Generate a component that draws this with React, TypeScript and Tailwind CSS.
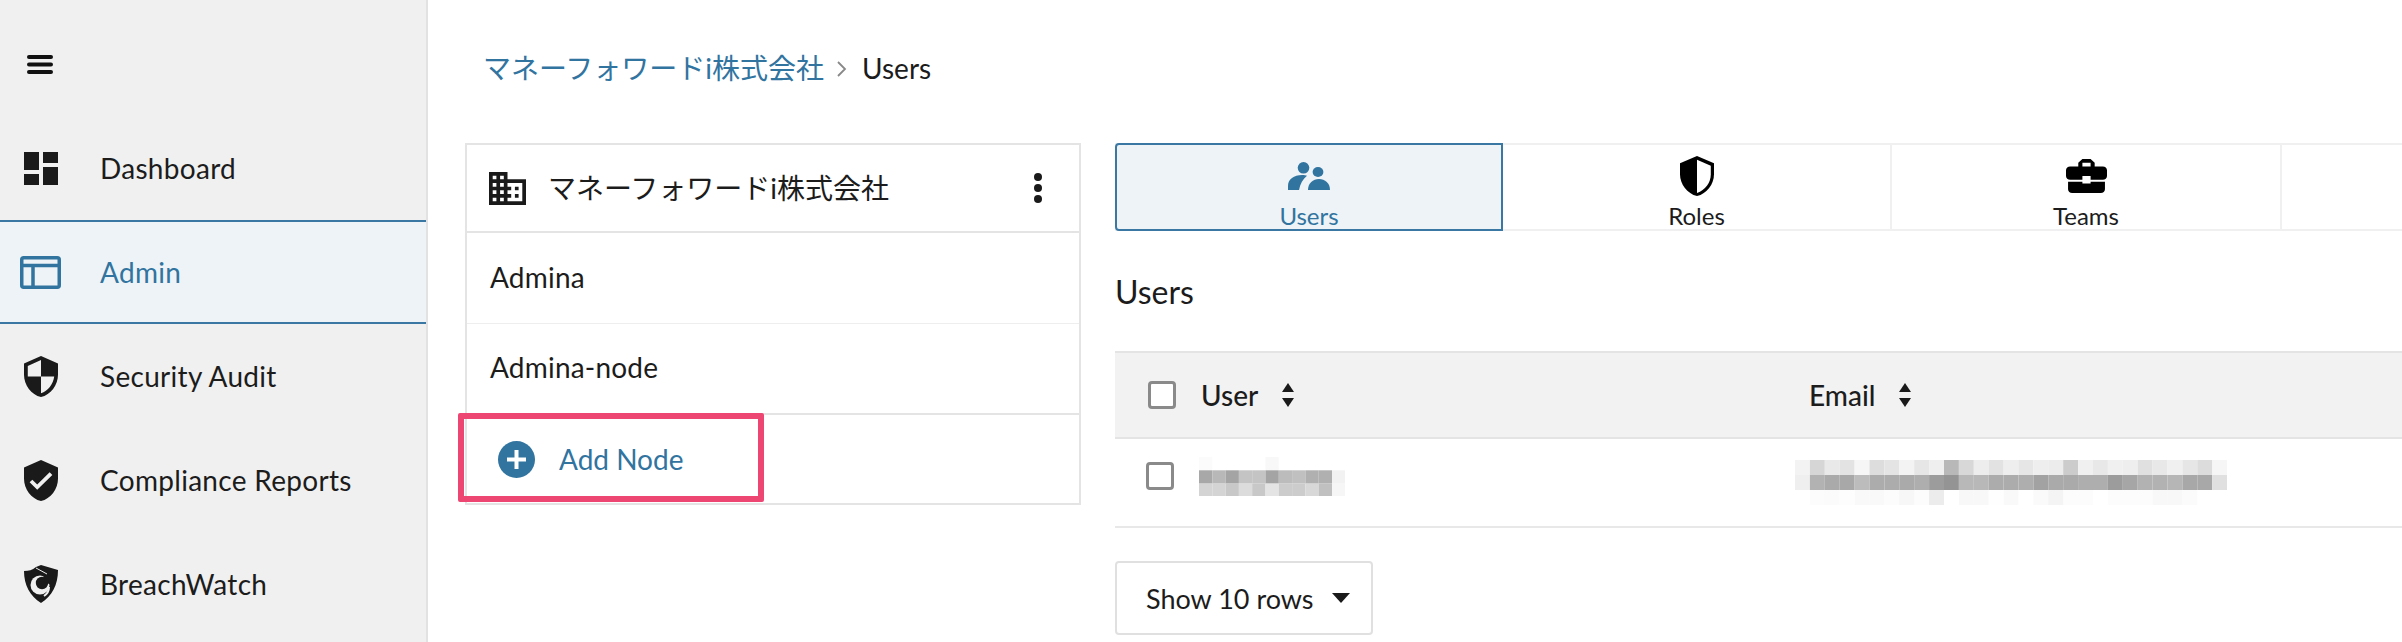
const font = { fontFamily: 'Lato, "Noto Sans CJK JP", sans-serif' };

const userCells = [
  ['#fbfbfb', '#ffffff', '#ffffff', '#ffffff', '#ffffff', '#f8f8f8', '#ffffff', '#ffffff', '#ffffff', '#ffffff', '#ffffff'],
  ['#a8a8a8', '#b8b8b8', '#a4a4a4', '#c4c4c4', '#c4c4c4', '#a4a4a4', '#bcbcbc', '#c0c0c0', '#b0b0b0', '#b0b0b0', '#f2f2f2'],
  ['#d4d4d4', '#d4d4d4', '#c8c8c8', '#dcdcdc', '#c8c8c8', '#e4e4e4', '#cccccc', '#cccccc', '#d8d8d8', '#c0c0c0', '#f6f6f6'],
];

const emailCells = [
  ['#f3f3f3', '#d6d6d6', '#e9e9e9', '#e3e3e3', '#f6f6f6', '#dddddd', '#e4e4e4', '#f3f3f3', '#e6e6e6', '#efefef', '#b8b8b8', '#d8d8d8', '#ededed', '#e2e2e2', '#eeeeee', '#e6e6e6', '#eeeeee', '#ececec', '#cccccc', '#f0f0f0', '#e8e8e8', '#f0f0f0', '#eeeeee', '#e0e0e0', '#e8e8e8', '#f0f0f0', '#e6e6e6', '#dcdcdc', '#f6f6f6'],
  ['#efefef', '#b2b2b2', '#aaaaaa', '#a8a8a8', '#bcbcbc', '#acacac', '#acacac', '#aaaaaa', '#aeaeae', '#9c9c9c', '#949494', '#b8b8b8', '#b8b8b8', '#acacac', '#acacac', '#aeaeae', '#a2a2a2', '#aaaaaa', '#aaaaaa', '#aeaeae', '#aeaeae', '#9c9c9c', '#a6a6a6', '#b2b2b2', '#b2b2b2', '#b6b6b6', '#a8a8a8', '#a8a8a8', '#e0e0e0'],
  ['#ffffff', '#fcfcfc', '#fbfbfb', '#fdfdfd', '#f9f9f9', '#f9f9f9', '#fcfcfc', '#f7f7f7', '#fcfcfc', '#ececec', '#ffffff', '#f8f8f8', '#f8f8f8', '#fefefe', '#f9f9f9', '#ffffff', '#fafafa', '#f4f4f4', '#fcfcfc', '#fcfcfc', '#ffffff', '#fcfcfc', '#fcfcfc', '#fcfcfc', '#f8f8f8', '#f8f8f8', '#fbfbfb', '#ffffff', '#ffffff'],
];

function Mosaic({ rows, cell, height }: { rows: string[][]; cell: number; height: number }) {
  return (
    <svg width={rows[0].length * cell} height={rows.length * height} className="block">
      {rows.map((row, y) =>
        row.map((c, x) => <rect key={`${x}-${y}`} x={x * cell} y={y * height} width={cell} height={height} fill={c} />),
      )}
    </svg>
  );
}

function SortIcon() {
  return (
    <svg width="14" height="26" viewBox="0 0 14 26" className="shrink-0 block" fill="#1a1a1a">
      <path d="M7 1l6 9H1z" />
      <path d="M7 25l6-9H1z" />
    </svg>
  );
}

function Checkbox() {
  return <div className="w-[28px] h-[28px] rounded-[4px] border-[3px] border-[#8a8a8a] bg-white shrink-0" />;
}

function NavItem({ icon, label, active }: { icon: React.ReactNode; label: string; active?: boolean }) {
  return (
    <div
      className={`h-[104px] flex items-center ${
        active ? 'bg-[#edf3f7] border-y-2 border-[#3a78a3] text-[#31749f]' : 'text-[#1c1c1c]'
      }`}
    >
      <div className="w-[81px] mr-[19px] flex justify-center shrink-0">{icon}</div>
      <span className="text-[28px] leading-none tracking-[0.3px]">{label}</span>
    </div>
  );
}

export default function App() {
  return (
    <div className="w-[2402px] h-[642px] overflow-hidden flex bg-white" style={font}>
      {/* Sidebar */}
      <aside className="w-[428px] h-full shrink-0 bg-[#f0f0f0] border-r-[2px] border-[#e2e2e2]">
        <div className="h-[116px] pl-[27px] pt-[55px]">
          <svg width="26" height="19" viewBox="0 0 26 19" fill="#111" className="block">
            <rect width="26" height="4" y="0" rx="2" />
            <rect width="26" height="4" y="7.500" rx="2" />
            <rect width="26" height="4" y="15" rx="2" />
          </svg>
        </div>
        <NavItem
          label="Dashboard"
          icon={
            <svg width="34" height="33" viewBox="0 0 34 33" fill="#1a1a1a">
              <rect x="0" y="0" width="15" height="18" />
              <rect x="19" y="0" width="15" height="11" />
              <rect x="0" y="22" width="15" height="11" />
              <rect x="19" y="15" width="15" height="18" />
            </svg>
          }
        />
        <NavItem
          active
          label="Admin"
          icon={
            <svg width="41" height="33" viewBox="0 0 41 33" fill="none" stroke="#31749f" strokeWidth="3.500">
              <rect x="1.750" y="1.750" width="37.500" height="29.500" rx="2" />
              <path d="M2 9.500h37M13 9.500v22" />
            </svg>
          }
        />
        <NavItem
          label="Security Audit"
          icon={
            <svg width="34" height="41" viewBox="3 1 18 22" preserveAspectRatio="none" fill="#1a1a1a">
              <path d="M12 1L3 5v6c0 5.550 3.840 10.740 9 12 5.160-1.260 9-6.450 9-12V5l-9-4zm0 10.990h7c-.530 4.120-3.280 7.790-7 8.940V12H5V6.300l7-3.110v8.800z" />
            </svg>
          }
        />
        <NavItem
          label="Compliance Reports"
          icon={
            <svg width="34" height="41" viewBox="3 1 18 22" preserveAspectRatio="none" fill="#1a1a1a">
              <path d="M12 1L3 5v6c0 5.550 3.840 10.740 9 12 5.160-1.260 9-6.450 9-12V5l-9-4zm-2 16l-4-4 1.410-1.410L10 14.170l6.590-6.590L18 9l-8 8z" />
            </svg>
          }
        />
        <NavItem
          label="BreachWatch"
          icon={
            <svg width="34" height="38" viewBox="0 0 34 38" fill="#1a1a1a">
              <path d="M0 6c5 0 8-1 12-4l5-2 17 5c0 15-6 26-17 33C6 31 0 20 0 6z" />
              <circle cx="16" cy="20" r="9.500" fill="#f0f0f0" />
              <circle cx="18" cy="18" r="6.200" fill="#1a1a1a" />
              <path d="M19 10l10 1-2 9-6-3z" fill="#1a1a1a" />
              <path d="M12 3l11 6" fill="none" stroke="#f0f0f0" strokeWidth="1" />
              <path d="M25 22c0 4-2 7-5 9" fill="none" stroke="#f0f0f0" strokeWidth="2" />
            </svg>
          }
        />
      </aside>

      {/* Main */}
      <main className="flex-1 min-w-0 pl-[37px]">
        <div className="h-[143px] pt-[50px] pl-[18px] flex items-start text-[28px] leading-[36px]">
          <span className="text-[#31749f]">マネーフォワードi株式会社</span>
          <svg width="10" height="16" viewBox="0 0 10 16" fill="none" stroke="#888888" strokeWidth="1.800" className="ml-[13px] mt-[11px]">
            <path d="M1 1l7 7-7 7" />
          </svg>
          <span className="ml-[15px] text-[#1c1c1c]">Users</span>
        </div>

        <div className="flex gap-[34px] items-start">
          {/* Node tree */}
          <div className="w-[616px] shrink-0 border-2 border-[#e4e4e4] text-[#1c1c1c]">
            <div className="h-[88px] border-b-2 border-[#e4e4e4] flex items-center pl-[22px] pr-[36px]">
              <svg width="37" height="33" viewBox="2 3 20 18" preserveAspectRatio="none" fill="#1a1a1a" className="shrink-0">
                <path d="M12 7V3H2v18h20V7H12zM6 19H4v-2h2v2zm0-4H4v-2h2v2zm0-4H4V9h2v2zm0-4H4V5h2v2zm4 12H8v-2h2v2zm0-4H8v-2h2v2zm0-4H8V9h2v2zm0-4H8V5h2v2zm10 12h-8v-2h2v-2h-2v-2h2v-2h-2V9h8v10zm-2-8h-2v2h2v-2zm0 4h-2v2h2v-2z" />
              </svg>
              <span className="ml-[22px] flex-1 text-[28px] leading-none">マネーフォワードi株式会社</span>
              <svg width="10" height="32" viewBox="0 0 10 32" fill="#1a1a1a">
                <circle cx="5" cy="5" r="4" />
                <circle cx="5" cy="16" r="4" />
                <circle cx="5" cy="27" r="4" />
              </svg>
            </div>
            <div className="h-[91px] pb-[3px] border-b border-[#eeeeee] flex items-center pl-[23px] text-[28px] tracking-[0.2px]">Admina</div>
            <div className="h-[91px] pb-[3px] border-b-2 border-[#e4e4e4] flex items-center pl-[23px] text-[28px] tracking-[0.2px]">Admina-node</div>
            <div className="relative h-[88px] flex items-center pl-[31px] text-[#31749f] text-[28px]">
              <svg width="37" height="37" viewBox="0 0 37 37" className="shrink-0">
                <circle cx="18.500" cy="18.500" r="18.500" fill="#31749f" />
                <path d="M18.500 9v19M9 18.500h19" stroke="#fff" strokeWidth="4" />
              </svg>
              <span className="ml-[24px]">Add Node</span>
              <div className="absolute left-[-9px] top-[-2px] w-[306px] h-[89px] border-[6px] border-[#ee4672] rounded-[2px]" />
            </div>
          </div>

          {/* Right column */}
          <div className="flex-1 min-w-0">
            <div className="flex h-[88px] border-y-2 border-[#f0f0f0]">
              <div className="-my-[2px] w-[388px] shrink-0 rounded-l-[4px] border-2 border-[#3a78a3] bg-[#edf3f7] flex flex-col items-center pt-[17px] text-[#31749f]">
                <svg width="42" height="28" viewBox="0 0 42 28" fill="#31749f" className="shrink-0">
                  <circle cx="15.500" cy="5.800" r="5.800" />
                  <ellipse cx="30" cy="10" rx="5.400" ry="5" />
                  <path d="M0 28v-4C0 17 6 13 14 13c2 0 4 .3 5 .8C15 17 12 22 11 28z" />
                  <path d="M20 28c0-7 5-11 11-11s11 4 11 11z" />
                </svg>
                <span className="text-[24px] leading-[26px] mt-[13px]">Users</span>
              </div>
              <div className="w-[389px] shrink-0 border-r-2 border-[#f0f0f0] flex flex-col items-center pt-[11px] text-[#1c1c1c]">
                <svg width="34" height="40" viewBox="3 1 18 22" preserveAspectRatio="none" className="shrink-0">
                  <path d="M12 1L3 5v6c0 5.550 3.840 10.740 9 12 5.160-1.260 9-6.450 9-12V5l-9-4z" fill="#000" />
                  <path d="M12 3l7.300 3.300V11c0 4.700-3 8.800-7.300 10.300z" fill="#fff" />
                </svg>
                <span className="text-[24px] leading-[26px] mt-[7px]">Roles</span>
              </div>
              <div className="w-[390px] shrink-0 border-r-2 border-[#f0f0f0] flex flex-col items-center pt-[14px] text-[#1c1c1c]">
                <svg width="41" height="34" viewBox="2 3 20 18" preserveAspectRatio="none" fill="#000" className="shrink-0">
                  <path d="M10 16v-1H3.010L3 19c0 1.110.890 2 2 2h14c1.110 0 2-.890 2-2v-4h-7v1h-4zm10-9h-4.010V5l-2-2h-4l-2 2v2H4c-1.100 0-2 .900-2 2v3c0 1.110.890 2 2 2h6v-2h4v2h6c1.100 0 2-.900 2-2V9c0-1.100-.900-2-2-2zm-6 0h-4V5h4v2z" />
                </svg>
                <span className="text-[24px] leading-[26px] mt-[10px]">Teams</span>
              </div>
            </div>

            <h1 className="text-[32px] leading-[30px] font-normal text-[#1c1c1c] mt-[46px]">Users</h1>

            <div className="mt-[44px] h-[88px] bg-[#f2f2f2] border-y-2 border-[#e4e4e4] flex items-center text-[#1c1c1c] text-[28px] font-medium">
              <div className="w-[694px] shrink-0 flex items-center pl-[33px]">
                <Checkbox />
                <span className="ml-[25px] leading-none">User</span>
                <span className="ml-[23px]"><SortIcon /></span>
              </div>
              <div className="flex items-center">
                <span className="leading-none">Email</span>
                <span className="ml-[23px]"><SortIcon /></span>
              </div>
            </div>
            <div className="h-[89px] border-b-2 border-[#e8e8e8] flex items-center">
              <div className="w-[680px] shrink-0 flex items-center pl-[31px] mb-[12px]">
                <Checkbox />
                <div className="ml-[25px] blur-[0.5px]">
                  <Mosaic rows={userCells} cell={13.300} height={13.300} />
                </div>
              </div>
              <div className="blur-[0.5px]">
                <Mosaic rows={emailCells} cell={14.900} height={15} />
              </div>
            </div>

            <div className="mt-[33px] w-[258px] h-[74px] rounded-[4px] border-2 border-[#e0e0e0] flex items-center pl-[29px] text-[#1c1c1c] text-[27px]">
              <span className="leading-none">Show 10 rows</span>
              <svg width="18" height="10" viewBox="0 0 18 10" className="ml-[18px]" fill="#1a1a1a">
                <path d="M0 0h18L9 10z" />
              </svg>
            </div>
          </div>
        </div>
      </main>
    </div>
  );
}
